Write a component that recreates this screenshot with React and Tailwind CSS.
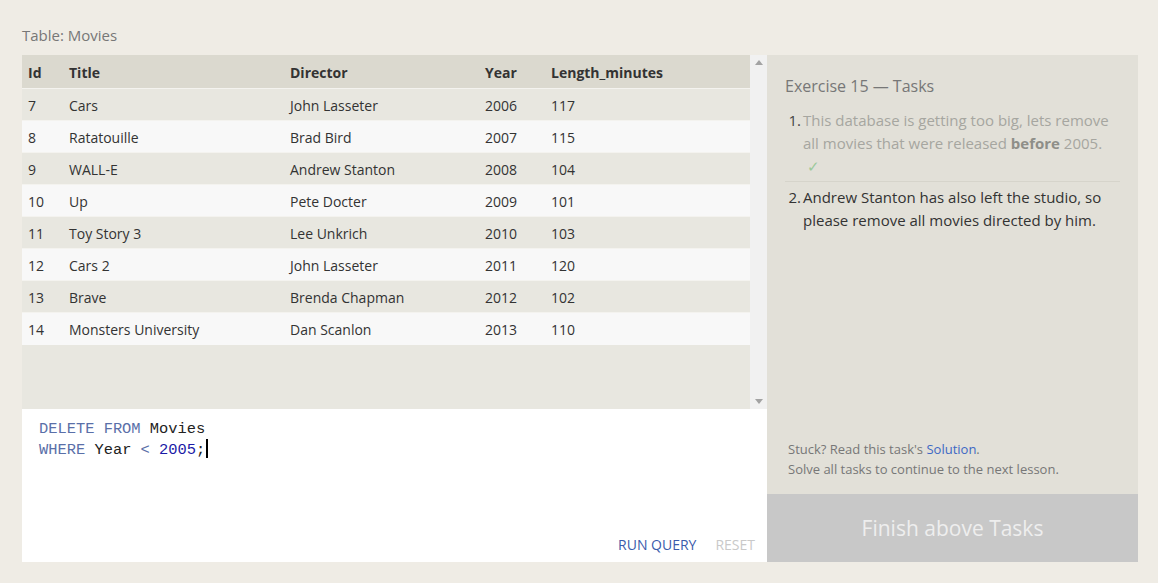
const rows = [
  [7, 'Cars', 'John Lasseter', 2006, 117],
  [8, 'Ratatouille', 'Brad Bird', 2007, 115],
  [9, 'WALL-E', 'Andrew Stanton', 2008, 104],
  [10, 'Up', 'Pete Docter', 2009, 101],
  [11, 'Toy Story 3', 'Lee Unkrich', 2010, 103],
  [12, 'Cars 2', 'John Lasseter', 2011, 120],
  [13, 'Brave', 'Brenda Chapman', 2012, 102],
  [14, 'Monsters University', 'Dan Scanlon', 2013, 110],
];

const font = { fontFamily: '"Open Sans", "Noto Sans", sans-serif' };

function ResultsTable() {
  return (
    <div className="flex h-[354px] bg-[#e8e7e0]">
      <div className="flex-1">
        <table className="w-full border-collapse text-[14px] text-[#333]">
          <thead>
            <tr className="h-[34px] bg-[#dbd9cf] text-left font-bold text-[#333]">
              <th className="w-[41px] pl-[6px] pt-[2px] font-bold">Id</th>
              <th className="w-[221px] pl-[6px] pt-[2px] font-bold">Title</th>
              <th className="w-[195px] pl-[6px] pt-[2px] font-bold">Director</th>
              <th className="w-[66px] pl-[6px] pt-[2px] font-bold">Year</th>
              <th className="pl-[6px] pt-[2px] font-bold">Length_minutes</th>
            </tr>
          </thead>
          <tbody>
            {rows.map((r, i) => (
              <tr
                key={r[0]}
                className={`h-[32px] border-t border-[#f4f3ef] ${i % 2 === 0 ? 'bg-[#e8e7e0]' : 'bg-[#f8f8f8]'}`}
              >
                {r.map((c, j) => (
                  <td key={j} className="pl-[6px] pt-[1px]">{c}</td>
                ))}
              </tr>
            ))}
          </tbody>
        </table>
      </div>
      {/* scrollbar */}
      <div className="flex w-[17px] flex-col items-center justify-between bg-[#f1f1f1] py-[5px]">
        <svg width="8" height="5" viewBox="0 0 8 5"><path d="M4 0 L8 5 L0 5 Z" fill="#a3a3a3" /></svg>
        <svg width="8" height="5" viewBox="0 0 8 5"><path d="M0 0 L8 0 L4 5 Z" fill="#a3a3a3" /></svg>
      </div>
    </div>
  );
}

function Editor() {
  return (
    <div className="relative flex h-[153px] flex-col bg-white">
      <pre
        className="px-[17px] pt-[10px] text-[15.4px] leading-[20px] text-[#222]"
        style={{ fontFamily: '"Liberation Mono", monospace' }}
      >
        <span className="text-[#5a6fa8]">DELETE FROM</span> Movies{'\n'}
        <span className="text-[#5a6fa8]">WHERE</span> Year <span className="text-[#5a6fa8]">&lt;</span>{' '}
        <span className="text-[#1a1aa6]">2005</span>;<span className="ml-[1px] inline-block h-[19px] w-[2px] bg-black align-[-4px]" />
      </pre>
      <div className="mt-auto flex justify-end gap-[19px] pb-[7px] pr-[12px] text-[14px]">
        <span className="text-[#3b5bab]">RUN QUERY</span>
        <span className="text-[#c9c9c9]">RESET</span>
      </div>
    </div>
  );
}

function TaskPanel() {
  return (
    <div className="flex w-[371px] flex-col bg-[#e2e0d8]">
      <div className="px-[18px] pt-[19px]">
        <h2 className="text-[16px] text-[#777]">Exercise 15 — Tasks</h2>
        <ol className="mt-[11px] text-[15px] leading-[23px]">
          <li className="flex border-b border-[#d6d4cb] pb-[3px]">
            <span className="w-[16px] shrink-0 text-right text-[#444]">1.</span>
            <div className="pl-[2px] text-[#a6a6a0]">
              This database is getting too big, lets remove all movies that were released{' '}
              <b className="text-[#8e8e88]">before</b> 2005.
              <div className="pl-[4px] text-[#9bc99b]">✓</div>
            </div>
          </li>
          <li className="flex pt-[4px]">
            <span className="w-[16px] shrink-0 text-right text-[#333]">2.</span>
            <div className="pl-[2px] text-[#333]">
              Andrew Stanton has also left the studio, so please remove all movies directed by him.
            </div>
          </li>
        </ol>
      </div>
      <div className="mt-auto px-[21px] pb-[15px] text-[13px] leading-[20px] text-[#777]">
        <p>
          Stuck? Read this task's <span className="text-[#3d68c4]">Solution</span>.
        </p>
        <p>Solve all tasks to continue to the next lesson.</p>
      </div>
      <div className="flex h-[68px] items-center justify-center bg-[#c8c8c8] pt-[2px] text-[21px] text-[#eeeeee]">
        Finish above Tasks
      </div>
    </div>
  );
}

export default function App() {
  return (
    <div className="min-h-[583px] bg-[#efece5] px-[22px] pt-[24px]" style={font}>
      <div className="mb-[8px] text-[15px] text-[#777]">Table: Movies</div>
      <div className="flex w-[1116px]">
        <div className="flex w-[745px] flex-col">
          <ResultsTable />
          <Editor />
        </div>
        <TaskPanel />
      </div>
    </div>
  );
}
